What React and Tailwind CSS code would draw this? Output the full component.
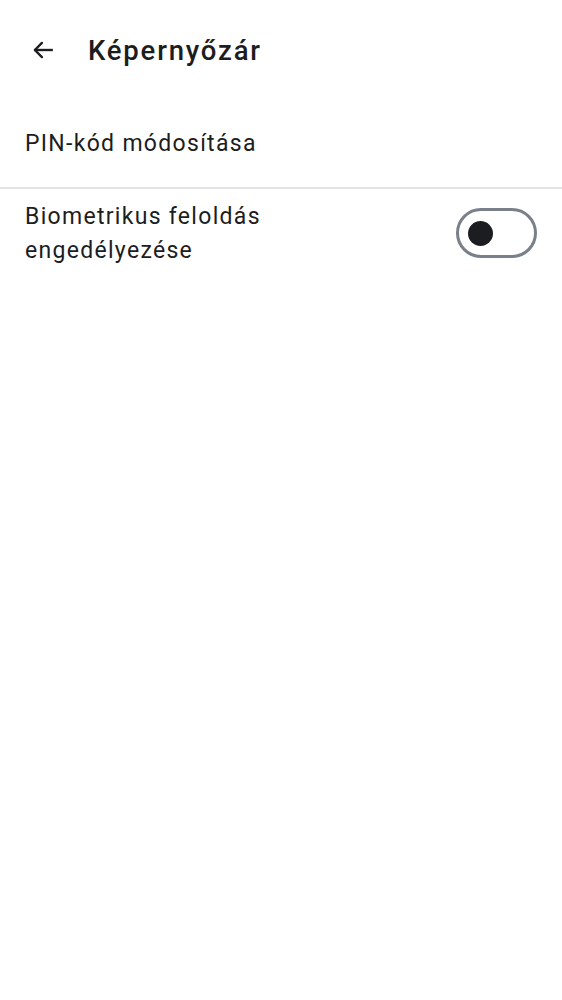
export default function App() {
  return (
    <div className="w-[562px] h-[1000px] bg-white text-[#1c1d21]" style={{ fontFamily: "Roboto, 'Noto Sans', sans-serif" }}>
      <div className="flex items-center h-[100px]">
        <div className="w-[88px] pl-[30px] flex items-center">
          <svg width="26" height="26" viewBox="0 0 24 24" fill="none" stroke="#1c1d21" strokeWidth="2.2" strokeLinecap="square">
            <path d="M20 12H5" />
            <path d="M11 5.5L4.5 12L11 18.5" strokeLinecap="round" strokeLinejoin="round" />
          </svg>
        </div>
        <h1 className="text-[27.5px] font-medium leading-[33px] tracking-[1.8px]">Képernyőzár</h1>
      </div>
      <div className="px-[25px] pt-[27px] pb-[27px] text-[23px] leading-[33px] tracking-[1.3px]">PIN-kód módosítása</div>
      <div className="h-[2px] bg-[#e1e3e6]" />
      <div className="flex items-start justify-between pl-[25px] pr-[25px] pt-[11px]">
        <div className="text-[23px] leading-[34px] tracking-[1.3px]">
          Biometrikus feloldás<br />engedélyezése
        </div>
        <div className="mt-[8px] w-[81px] h-[50px] rounded-full border-[3px] border-[#79808a] flex items-center pl-[9px] box-border">
          <div className="w-[25px] h-[25px] rounded-full bg-[#1c1d21]" />
        </div>
      </div>
    </div>
  );
}
